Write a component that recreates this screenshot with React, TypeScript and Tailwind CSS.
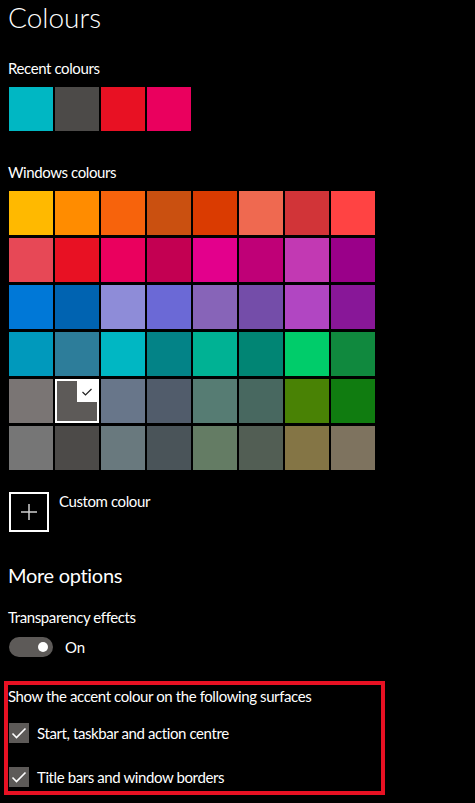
import { Fragment } from "react";

const RECENT = ["#00b7c3", "#4c4a48", "#e81123", "#ea005e"];

const WINDOWS_COLOURS: string[][] = [
  ["#ffb900", "#ff8c00", "#f7630c", "#ca5010", "#da3b01", "#ef6950", "#d13438", "#ff4343"],
  ["#e74856", "#e81123", "#ea005e", "#c30052", "#e3008c", "#bf0077", "#c239b3", "#9a0089"],
  ["#0078d7", "#0063b1", "#8e8cd8", "#6b69d6", "#8764b8", "#744da9", "#b146c2", "#881798"],
  ["#0099bc", "#2d7d9a", "#00b7c3", "#038387", "#00b294", "#018574", "#00cc6a", "#10893e"],
  ["#7a7574", "#5d5a58", "#68768a", "#515c6b", "#567c73", "#486860", "#498205", "#107c10"],
  ["#767676", "#4c4a48", "#69797e", "#4a5459", "#647c64", "#525e54", "#847545", "#7e735f"],
];

const SELECTED = "#5d5a58";

function Swatch({ colour, selected }: { colour: string; selected?: boolean }) {
  if (!selected) {
    return <div className="h-[44px] w-[44px]" style={{ backgroundColor: colour }} />;
  }
  return (
    <div className="relative h-[44px] w-[44px] border-2 border-white" style={{ backgroundColor: colour }}>
      <div className="absolute right-0 top-0 flex h-[21px] w-[20px] items-center justify-center bg-white">
        <svg width="12" height="10" viewBox="0 0 12 10" fill="none">
          <path d="M1.5 5 L4.5 8 L10.5 2" stroke="#222" strokeWidth="1.2" />
        </svg>
      </div>
    </div>
  );
}

function Checkbox({ label }: { label: string }) {
  return (
    <div className="flex h-[20px] items-center gap-[8px]">
      <div className="ml-px flex h-[20px] w-[20px] items-center justify-center bg-[#5d5a58]">
        <svg width="20" height="20" viewBox="0 0 20 20" fill="none">
          <path d="M3.5 10.5 L7.5 14.5 L16.5 5.5" stroke="#fff" strokeWidth="1.6" />
        </svg>
      </div>
      <span className="text-[15px] leading-[20px] tracking-[-0.4px]">{label}</span>
    </div>
  );
}

export default function App() {
  return (
    <div
      className="h-[803px] w-[475px] overflow-hidden bg-black px-2 text-white"
      style={{ fontFamily: '"Segoe UI", Lato, "Noto Sans", sans-serif' }}
    >
      <h1 className="pt-px text-[28px] leading-[32px] font-light">Colours</h1>

      <p className="mt-[25px] text-[15px] leading-[20px] tracking-[-0.4px]">Recent colours</p>
      <div className="ml-px mt-[9px] flex gap-[2px]">
        {RECENT.map((c, i) => (
          <Swatch key={i} colour={c} />
        ))}
      </div>

      <p className="mt-[31px] text-[15px] leading-[20px] tracking-[-0.4px]">Windows colours</p>
      <div className="ml-px mt-[9px] grid w-[366px] grid-cols-8 gap-x-[2px] gap-y-[3px]">
        {WINDOWS_COLOURS.map((row, r) => (
          <Fragment key={r}>
            {row.map((c, i) => (
              <Swatch key={i} colour={c} selected={r === 4 && c === SELECTED} />
            ))}
          </Fragment>
        ))}
      </div>

      <div className="ml-px mt-[22px] flex items-start gap-[10px]">
        <div className="flex h-[40px] w-[40px] items-center justify-center border-2 border-white">
          <svg width="18" height="18" viewBox="0 0 18 18" fill="none">
            <path d="M9 1 V17 M1 9 H17" stroke="#d0d0d0" strokeWidth="1.5" />
          </svg>
        </div>
        <span className="-mt-px text-[15px] leading-[20px] tracking-[-0.4px]">Custom colour</span>
      </div>

      <h2 className="mt-[29px] text-[20px] leading-[28px] font-normal tracking-[-0.3px]">More options</h2>

      <p className="mt-[18px] text-[15px] leading-[20px] tracking-[-0.4px]">Transparency effects</p>
      <div className="mt-[10px] flex h-[20px] items-center gap-[12px]">
        <div className="ml-px flex h-[20px] w-[44px] items-center justify-end rounded-full bg-[#5d5a58] pr-[5px]">
          <div className="h-[10px] w-[10px] rounded-full bg-white" />
        </div>
        <span className="text-[15px] leading-[20px]">On</span>
      </div>

      <div className="-ml-1 mt-[24px] w-[381px] border-4 border-[#e81123] pb-[4px]">
        <p className="pt-px text-[15px] leading-[20px] tracking-[-0.4px]">
          Show the accent colour on the following surfaces
        </p>
        <div className="mt-[17px]">
          <Checkbox label="Start, taskbar and action centre" />
        </div>
        <div className="mt-[24px]">
          <Checkbox label="Title bars and window borders" />
        </div>
      </div>
    </div>
  );
}
